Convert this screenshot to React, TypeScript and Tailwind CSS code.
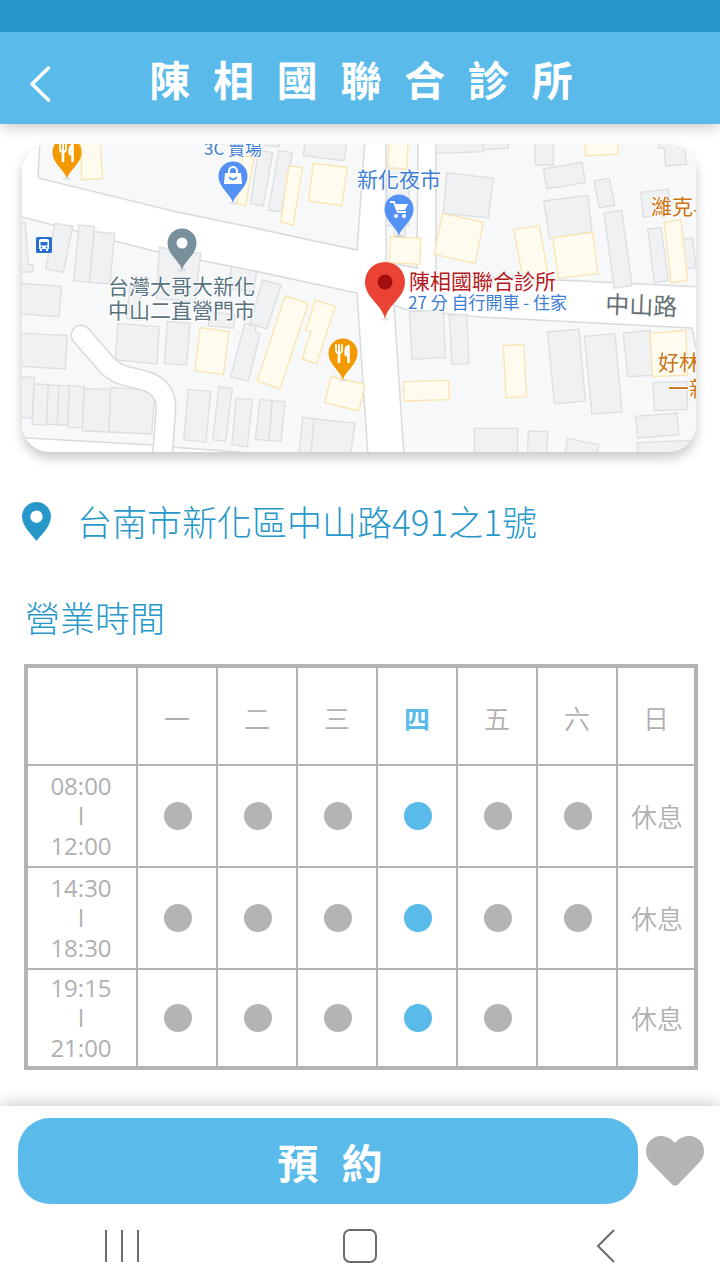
import React from "react";

type Tile = { x: number; y: number; plain: string[]; warm: string[] };

// Building outlines, grouped by map tile; three units make one map pixel.
const tiles: Tile[] = [
  {
    x: 10,
    y: 135,
    plain: [
      "30,262 46,262 55,390 68,390 70,410 30,412",
      "135,265 188,273 160,412 107,402",
      "207,270 253,274 238,442 191,438",
      "253,290 314,296 300,447 238,442",
      "30,445 154,454 147,545 30,537",
      "448,337 572,356 555,500 440,490",
      "665,395 740,410 730,470 655,460",
      "360,450 395,455 385,555 350,550",
    ],
    warm: ["212,15 270,15 278,130 215,134"],
  },
  {
    x: 240,
    y: 135,
    plain: [
      "55,45 98,53 70,212 32,205",
      "117,47 157,53 125,232 85,225",
      "195,20 320,20 312,77 190,62",
      "70,10 122,10 118,35 75,32",
      "443,100 507,100 507,272 437,272",
      "462,272 495,272 495,305 462,305",
      "585,10 730,10 730,50 588,55",
      "620,113 760,130 745,248 610,235",
    ],
    warm: [
      "8,60 42,68 17,212 -10,205",
      "147,93 188,97 160,270 122,262",
      "220,85 322,97 305,212 205,198",
      "447,10 505,10 500,102 443,98",
      "452,305 542,310 540,388 448,383",
      "608,235 730,262 705,385 583,358",
    ],
  },
  {
    x: 470,
    y: 135,
    plain: [
      "40,10 115,10 115,40 40,43",
      "193,10 250,10 250,90 197,90",
      "220,102 336,82 346,142 231,162",
      "372,138 418,130 434,210 388,219",
      "221,198 353,181 366,290 239,310",
      "402,234 455,226 486,452 433,460",
      "512,172 595,162 603,235 520,247",
      "533,282 573,278 595,437 553,443",
      "637,313 668,310 678,398 645,400",
      "565,10 640,10 650,88 587,93 583,40 565,38",
    ],
    warm: [
      "345,10 445,10 443,58 347,62",
      "131,283 208,272 235,425 160,437",
      "248,308 368,292 384,415 265,430",
      "583,262 632,254 653,437 603,443",
    ],
  },
  {
    x: 10,
    y: 295,
    plain: [
      "30,114 172,122 166,222 30,214",
      "323,86 448,95 441,207 316,194",
      "472,79 540,84 530,210 463,205",
      "30,245 73,247 67,370 30,367",
      "73,267 115,269 110,391 66,388",
      "115,270 147,272 142,388 110,388",
      "147,272 178,272 175,390 142,390",
      "178,272 223,274 217,398 173,397",
      "222,281 302,284 297,411 217,408",
      "302,277 435,287 425,417 297,411",
      "535,283 602,289 588,442 521,434",
      "627,275 667,280 647,439 608,434",
      "678,310 727,313 712,455 666,449",
      "600,50 675,60 670,100 595,92",
    ],
    warm: ["571,98 657,110 640,238 554,227"],
  },
  {
    x: 240,
    y: 295,
    plain: [
      "14,85 45,92 48,113 60,117 25,258 -28,245",
      "68,-45 124,-30 80,102 30,85",
      "60,313 97,317 87,436 46,433",
      "97,317 135,320 123,440 87,436",
      "188,366 222,372 212,490 176,490",
      "222,372 345,384 330,490 212,490",
      "508,50 610,45 616,187 516,193",
      "628,60 680,58 687,205 636,208",
    ],
    warm: [
      "135,3 205,25 120,282 51,258",
      "226,15 286,34 230,206 187,192 213,110 197,105",
      "273,244 375,268 357,348 254,323",
      "490,260 626,256 628,314 492,318",
    ],
  },
  {
    x: 470,
    y: 295,
    plain: [
      "13,400 143,400 143,490 13,490",
      "233,111 327,103 346,318 253,326",
      "343,124 435,116 456,350 366,358",
      "460,114 540,106 548,241 473,245",
      "549,263 651,260 653,343 553,347",
      "497,364 621,354 626,419 503,429",
      "502,443 690,435 690,490 505,490",
      "175,408 233,410 230,490 172,490",
      "292,430 386,449 378,490 284,490",
    ],
    warm: ["100,152 161,148 170,305 108,308", "540,115 647,106 653,240 548,245"],
  },
];

const blocks = [
  "40,140 38,178 177,212 250,227 357,250 365,140",
  "386,140 418,140 417,268 386,262",
  "436,140 436,275 580,281 700,287 700,140",
  "18,216 158,252 250,270 357,293 368,456 290,456 171,447 152,445 27,438 18,438",
  "394,305 404,309 480,317 692,328 696,348 700,350 700,456 404,456",
];

function Pin({ x, y, color, children }: { x: number; y: number; color: string; children?: React.ReactNode }) {
  return (
    <g transform={`translate(${x} ${y})`}>
      <ellipse cx="0" cy="27" rx="4" ry="1.500" fill="#000" opacity="0.08" />
      <path d="M0 27C-2 18-14.500 12-14.500 0A14.500 14.500 0 1 1 14.500 0C14.500 12 2 18 0 27Z" fill={color} />
      {children}
    </g>
  );
}

function Food() {
  return (
    <g fill="none" stroke="#fff" strokeLinecap="round">
      <path d="M-7-8v5q0 3 3 3t3-3v-5M-4-8V9" strokeWidth="1.800" />
      <path d="M-4 0V9" strokeWidth="2.600" />
      <path d="M5.500-7V9M4-6q-2 3-1 8h2" strokeWidth="2.600" />
    </g>
  );
}

function ClinicMap() {
  return (
    <svg
      viewBox="22 144 674 308"
      preserveAspectRatio="xMidYMid slice"
      className="block w-full"
      role="img"
      aria-label="陳相國聯合診所地圖"
      fontFamily='"Noto Sans CJK TC", sans-serif'
    >
      <rect x="22" y="144" width="674" height="308" fill="#fff" />
      {blocks.map((points) => (
        <polygon key={points} points={points} fill="#f7f8fa" stroke="#d9dade" strokeWidth="1.500" />
      ))}
      {tiles.map((tile) => (
        <g key={`${tile.x}-${tile.y}`} transform={`translate(${tile.x} ${tile.y}) scale(0.333333)`} strokeWidth="4">
          {tile.plain.map((points) => (
            <polygon key={points} points={points} fill="#f0f1f3" stroke="#dddee2" />
          ))}
          {tile.warm.map((points) => (
            <polygon key={points} points={points} fill="#fffbef" stroke="#fae5b0" />
          ))}
        </g>
      ))}
      <g fill="none" strokeLinecap="round">
        <path d="M81 335L107 365Q115 374 130 377L146 381Q166 388 166 408L162 462" stroke="#d9dade" strokeWidth="21" />
        <path d="M81 335L107 365Q115 374 130 377L146 381Q166 388 166 408L162 462" stroke="#fff" strokeWidth="18" />
      </g>

      <Pin x={67} y={152} color="#f29900"><Food /></Pin>
      <Pin x={343} y={353} color="#f29900"><Food /></Pin>
      <Pin x={233} y={176} color="#5491f5">
        <path d="M-8-3H8L9 8H-9Z" fill="#fff" />
        <path d="M-4-3v-2a4 4 0 0 1 8 0v2" fill="none" stroke="#fff" strokeWidth="2" />
        <path d="M-4 1q4 5 8 0" fill="none" stroke="#5491f5" strokeWidth="1.800" />
      </Pin>
      <Pin x={399} y={209} color="#5491f5">
        <path d="M-9-7h4l4 10H7" fill="none" stroke="#fff" strokeWidth="1.800" />
        <path d="M-5-5H9L6 1H-3Z" fill="#fff" />
        <circle cx="-3" cy="7" r="2" fill="#fff" />
        <circle cx="5" cy="7" r="2" fill="#fff" />
      </Pin>
      <Pin x={182} y={243} color="#78909c"><circle r="5.500" fill="#fff" /></Pin>
      <g transform="translate(385 282)">
        <ellipse cx="0" cy="37" rx="4" ry="1.500" fill="#000" opacity="0.1" />
        <path d="M0 37C-3 22-20 16-20 0A20 20 0 1 1 20 0C20 16 3 22 0 37Z" fill="#ea4335" />
        <circle r="7.500" fill="#a50e0e" />
      </g>
      <g transform="translate(36 237)">
        <rect width="16" height="16" rx="1.500" fill="#2a6fd0" />
        <path d="M3 4q0-2 2-2h6q2 0 2 2v8h-1v2h-2v-2H6v2H4v-2H3Z" fill="#fff" />
        <path d="M4.500 5h7v3.500h-7z" fill="#2a6fd0" />
        <circle cx="5.500" cy="10.500" r="0.900" fill="#2a6fd0" />
        <circle cx="10.500" cy="10.500" r="0.900" fill="#2a6fd0" />
      </g>

      <g stroke="#fff" strokeWidth="2" strokeLinejoin="round" paintOrder="stroke" fontSize="21">
        <g fill="#3d7dd2">
          <text x="204" y="155" fontSize="17">3C 賣場</text>
          <text x="357" y="187">新化夜市</text>
          <text x="408" y="309" fontSize="17">27 分 自行開車 - 住家</text>
        </g>
        <g fill="#587380">
          <text x="108" y="294">台灣大哥大新化</text>
          <text x="108" y="318">中山二直營門市</text>
        </g>
        <text x="409" y="289" fill="#b3191c">陳相國聯合診所</text>
        <text x="605" y="313" fontSize="24" fill="#667075" transform="rotate(2 605 312)">中山路</text>
        <g fill="#cb730f">
          <text x="651" y="214">濰克早</text>
          <text x="658" y="370">好林</text>
          <text x="668" y="396">一新</text>
        </g>
      </g>
    </svg>
  );
}

const days = ["一", "二", "三", "四", "五", "六", "日"];
const today = 3;
const sessions = [
  { from: "08:00", to: "12:00", open: 6, height: "h-[102px]" },
  { from: "14:30", to: "18:30", open: 6, height: "h-[102px]" },
  { from: "19:15", to: "21:00", open: 5, height: "h-[96px]" },
];

function Hours() {
  return (
    <table
      aria-labelledby="hours"
      className="w-full table-fixed border-separate border-spacing-0 border-4 border-[#b4b4b4] text-center text-[26px] leading-[30px] font-[350] text-[#b0b0b0]"
    >
      <colgroup>
        <col className="w-[110px]" />
        {days.slice(0, 6).map((d) => (
          <col key={d} />
        ))}
        <col className="w-[76px]" />
      </colgroup>
      <thead>
        <tr className="h-[98px]">
          <td className="border-r-2 border-b-2 border-[#b4b4b4] p-0" />
          {days.map((day, i) => (
            <th
              key={day}
              scope="col"
              className={`border-b-2 border-[#b4b4b4] p-0 pt-1 ${i < 6 ? "border-r-2" : ""} ${
                i === today ? "font-bold text-[#5abbeb]" : "font-[350]"
              }`}
            >
              {day}
            </th>
          ))}
        </tr>
      </thead>
      <tbody>
        {sessions.map((s, row) => {
          const line = row < 2 ? "border-b-2" : "";
          return (
            <tr key={s.from} className={s.height}>
              <th
                scope="row"
                className={`border-r-2 border-[#b4b4b4] p-0 pr-[2px] font-['Open_Sans',sans-serif] text-[24px] font-normal ${line}`}
              >
                <span className="block">{s.from}</span>
                <span className="block">l</span>
                <span className="block">{s.to}</span>
              </th>
              {days.map((day, i) => (
                <td key={day} className={`border-[#b4b4b4] p-0 pl-[2px] ${line} ${i < 6 ? "border-r-2" : ""}`}>
                  {i < s.open && (
                    <span
                      role="img"
                      aria-label="看診"
                      className={`mx-auto block size-7 rounded-full ${i === today ? "bg-[#5abbeb]" : "bg-[#b4b4b4]"}`}
                    />
                  )}
                  {i === 6 && "休息"}
                </td>
              ))}
            </tr>
          );
        })}
      </tbody>
    </table>
  );
}

export default function App() {
  return (
    <div className="flex min-h-screen flex-col bg-white font-['Noto_Sans_CJK_TC',sans-serif]">
      <div className="h-8 bg-[#2898cb]" />
      <header className="flex h-[92px] items-center bg-[#5abbeb] shadow-[0_6px_12px_-2px_rgba(0,0,0,0.2)]">
        <button type="button" aria-label="返回" className="flex h-full w-20 items-center pt-3 pl-7">
          <svg width="24" height="40" viewBox="0 0 24 40" fill="none" stroke="#fff" strokeWidth="3.500" strokeLinecap="round" strokeLinejoin="round">
            <path d="M20.500 4L4 20L20.500 36" />
          </svg>
        </button>
        <h1 className="flex-1 pt-2 text-center font-['Liberation_Sans','Noto_Sans_CJK_TC',sans-serif] text-[41px] leading-[60px] font-bold whitespace-pre text-white">
          {"陳  相  國  聯  合  診  所"}
        </h1>
        <span className="w-[78px]" />
      </header>

      <main className="flex-1 pt-5 pr-[22px] pl-[22px]">
        <div className="mr-[2px] overflow-hidden rounded-[28px] shadow-[0_6px_12px_rgba(0,0,0,0.22)]">
          <ClinicMap />
        </div>
        <div className="mt-[45px] flex items-center gap-[26px] text-[#2898cb]">
          <svg width="29" height="39" viewBox="0 0 29 39" fill="currentColor" fillRule="evenodd" aria-hidden="true">
            <path d="M14.500 0C6.500 0 0 6.500 0 14.500C0 25 11 34 14.500 39C18 34 29 25 29 14.500C29 6.500 22.500 0 14.500 0ZM14.500 8.500a6.200 6.200 0 1 1 0 12.400a6.200 6.200 0 0 1 0-12.400Z" />
          </svg>
          <p className="text-[35px] leading-[48px] font-light">台南市新化區中山路491之1號</p>
        </div>
        <h2 id="hours" className="mt-12 ml-[3px] text-[35px] leading-[48px] font-light text-[#2898cb]">
          營業時間
        </h2>
        <div className="mt-[23px] ml-[2px]">
          <Hours />
        </div>
      </main>

      <footer className="bg-white shadow-[0_-6px_14px_-2px_rgba(0,0,0,0.18)]">
        <div className="flex items-center gap-2 pt-3 pr-4 pl-[18px]">
          <button
            type="button"
            className="h-[86px] flex-1 rounded-[32px] bg-[#5abbeb] pt-2 pl-1 text-center font-['Liberation_Sans','Noto_Sans_CJK_TC',sans-serif] text-[41px] leading-[60px] font-bold whitespace-pre text-white"
          >
            {"預  約"}
          </button>
          <button type="button" aria-label="收藏">
            <svg width="58" height="52" viewBox="0 0 58 52" fill="#b4b4b4">
              <path d="M29 8C33 3 38 1 43 1C52 1 58 8 58 16C58 22 55 26 51 30L32 49.500Q29 52 26 49.500L7 30C3 26 0 22 0 16C0 8 6 1 15 1C20 1 25 3 29 8Z" />
            </svg>
          </button>
        </div>
        <nav className="flex h-[76px] items-center justify-between pt-2 pr-[100px] pl-[100px]">
          <button type="button" aria-label="最近使用">
            <svg width="44" height="36" viewBox="0 0 44 36" stroke="#6b6b6b" strokeWidth="2">
              <path d="M6 2V34M22 2V34M38 2V34" />
            </svg>
          </button>
          <button type="button" aria-label="主畫面">
            <svg width="36" height="36" viewBox="0 0 36 36" fill="none" stroke="#6b6b6b" strokeWidth="2">
              <rect x="2" y="2" width="32" height="32" rx="6" />
            </svg>
          </button>
          <button type="button" aria-label="上一頁">
            <svg width="44" height="36" viewBox="0 0 44 36" fill="none" stroke="#6b6b6b" strokeWidth="2">
              <path d="M38 2L22 18L38 34" />
            </svg>
          </button>
        </nav>
      </footer>
    </div>
  );
}
